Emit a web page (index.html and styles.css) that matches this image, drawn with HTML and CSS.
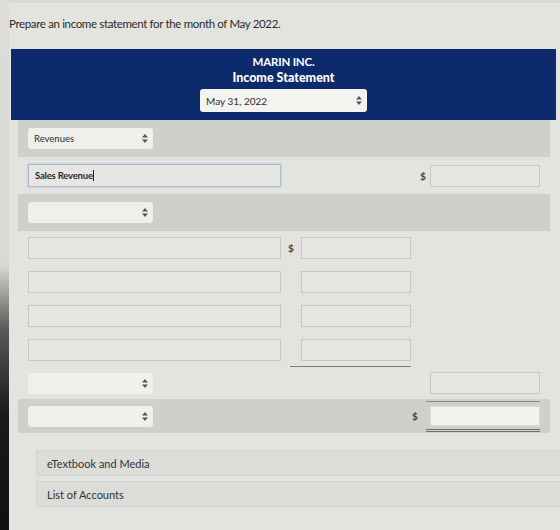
FILE: index.html
```html
<!DOCTYPE html>
<html lang="en">

<head>
    <meta charset="UTF-8">
    <meta name="viewport" content="width=device-width, initial-scale=1.0">
    <title>Income Statement</title>
    <link rel="stylesheet" href="styles.css">
</head>

<body>
    <div class="edge"></div>
    <div class="page">
        <p class="prompt">Prepare an income statement for the month of May 2022.</p>

        <div class="sheet">
            <div class="sheet-head">
                <div class="company">MARIN INC.</div>
                <div class="title">Income Statement</div>
                <div class="select date-select">
                    <span>May 31, 2022</span>
                    <svg class="arrows" width="6" height="9" viewBox="0 0 6 9"><path d="M3 0L6 3.5H0zM3 9L0 5.5H6z" fill="#555"/></svg>
                </div>
            </div>

            <div class="row shaded tall">
                <div class="select">
                    <span>Revenues</span>
                    <svg class="arrows" width="6" height="9" viewBox="0 0 6 9"><path d="M3 0L6 3.5H0zM3 9L0 5.5H6z" fill="#555"/></svg>
                </div>
            </div>

            <div class="row tall">
                <div class="field label focused">Sales Revenue<span class="caret"></span></div>
                <span class="dollar d2">$</span>
                <div class="field amount2"></div>
            </div>

            <div class="row shaded tall">
                <div class="select">
                    <span></span>
                    <svg class="arrows" width="6" height="9" viewBox="0 0 6 9"><path d="M3 0L6 3.5H0zM3 9L0 5.5H6z" fill="#555"/></svg>
                </div>
            </div>

            <div class="row">
                <div class="field label"></div>
                <span class="dollar d1">$</span>
                <div class="field amount1"></div>
            </div>

            <div class="row">
                <div class="field label"></div>
                <div class="field amount1"></div>
            </div>

            <div class="row">
                <div class="field label"></div>
                <div class="field amount1"></div>
            </div>

            <div class="row">
                <div class="field label"></div>
                <div class="subtotal">
                    <div class="field"></div>
                </div>
            </div>

            <div class="row short">
                <div class="select">
                    <span></span>
                    <svg class="arrows" width="6" height="9" viewBox="0 0 6 9"><path d="M3 0L6 3.5H0zM3 9L0 5.5H6z" fill="#555"/></svg>
                </div>
                <div class="field amount2"></div>
            </div>

            <div class="row shaded">
                <div class="select">
                    <span></span>
                    <svg class="arrows" width="6" height="9" viewBox="0 0 6 9"><path d="M3 0L6 3.5H0zM3 9L0 5.5H6z" fill="#555"/></svg>
                </div>
                <span class="dollar d2 shift">$</span>
                <div class="grand-total">
                    <div class="field white"></div>
                </div>
            </div>
        </div>

        <div class="links">
            <div class="link-bar">eTextbook and Media</div>
            <div class="link-bar">List of Accounts</div>
        </div>
    </div>
</body>

</html>
```

FILE: styles.css
```css
body {
    margin: 0;
    background-color: #e3e3df;
    font-family: 'Lato', 'Open Sans', sans-serif;
    color: #333;
    display: flex;
    height: 530px;
    overflow: hidden;
}

.edge {
    width: 9px;
    flex-shrink: 0;
    background: linear-gradient(to bottom, #dcdcd8 0%, #d8d8d4 50%, #5a5a5a 62%, #1a1a1a 78%, #101010 100%);
}

.page {
    flex: 1;
    border-top: 3px solid #d8d8d4;
}

.prompt {
    margin: 14px 0 0 0;
    font-size: 11.5px;
    letter-spacing: -0.35px;
    color: #2b2b2b;
}

.sheet {
    margin: 19px 4px 0 2px;
}

.sheet-head {
    background-color: #0d2a6c;
    height: 71px;
    display: flex;
    flex-direction: column;
    align-items: center;
    padding-top: 5px;
    box-sizing: border-box;
}

.company {
    color: #fff;
    font-size: 11.5px;
    font-weight: 700;
    letter-spacing: -0.2px;
    line-height: 15px;
}

.title {
    color: #fff;
    font-size: 12.5px;
    font-weight: 900;
    line-height: 17px;
    letter-spacing: 0;
}

.select {
    width: 125px;
    height: 21px;
    background-color: #efefec;
    border-radius: 3px;
    display: flex;
    align-items: center;
    justify-content: space-between;
    padding: 0 5px 0 6px;
    box-sizing: border-box;
    font-size: 9.5px;
    color: #2e2e2e;
}

.date-select {
    width: 167px;
    height: 23px;
    margin-top: 3px;
    background-color: #f3f3f0;
    font-size: 10px;
}

.row {
    display: grid;
    grid-template-columns: 253px 20px 110px 9px 10px 110px;
    align-items: center;
    height: 34px;
    margin: 0 6px 0 7px;
    padding: 0 10px;
}

.row.tall {
    height: 37px;
}

.row.short {
    height: 32px;
}

.row.shaded {
    background-color: #cfcfcb;
}

.row .select {
    grid-column: 1;
}

.field {
    height: 22px;
    border: 1px solid #c6c6c2;
    background-color: #e6e6e2;
    box-sizing: border-box;
    font-size: 9.5px;
    display: flex;
    align-items: center;
    padding-left: 6px;
}

.label {
    grid-column: 1;
}

.focused {
    border: 1px solid #a9bccf;
    box-shadow: 0 0 2px rgba(90, 130, 180, 0.4);
    color: #2a2a2a;
    font-weight: 700;
    letter-spacing: -0.2px;
    height: 23px;
}

.caret {
    display: inline-block;
    width: 1px;
    height: 11px;
    background-color: #222;
}

.dollar {
    font-size: 10px;
    font-weight: 700;
    color: #444;
}

.d1 {
    grid-column: 2;
    justify-self: center;
}

.d2 {
    grid-column: 5;
    justify-self: start;
}

.d2.shift {
    margin-left: -8px;
}

.amount1 {
    grid-column: 3;
}

.amount2 {
    grid-column: 6;
}

.subtotal {
    grid-column: 2 / 4;
    align-self: end;
    margin-left: 9px;
    padding: 0 0 5px 11px;
    border-bottom: 1.5px solid #7a7a78;
}

.grand-total {
    grid-column: 6;
    margin-left: -4px;
    padding: 4px 0 3px 4px;
    border-top: 1px solid #8a8a88;
    border-bottom: 3px double #6f6f6d;
}

.grand-total .field {
    height: 20px;
}

.white {
    background-color: #f2f2ef;
    border-color: #dadad6;
}

.links {
    margin: 17px 0 0 27px;
    display: flex;
    flex-direction: column;
    gap: 5px;
}

.link-bar {
    height: 24px;
    background-color: #dcdcd8;
    border: 1px solid #d2d2ce;
    border-right: none;
    border-radius: 2px 0 0 2px;
    display: flex;
    align-items: center;
    padding-left: 10px;
    font-size: 11px;
    color: #333;
}
```
